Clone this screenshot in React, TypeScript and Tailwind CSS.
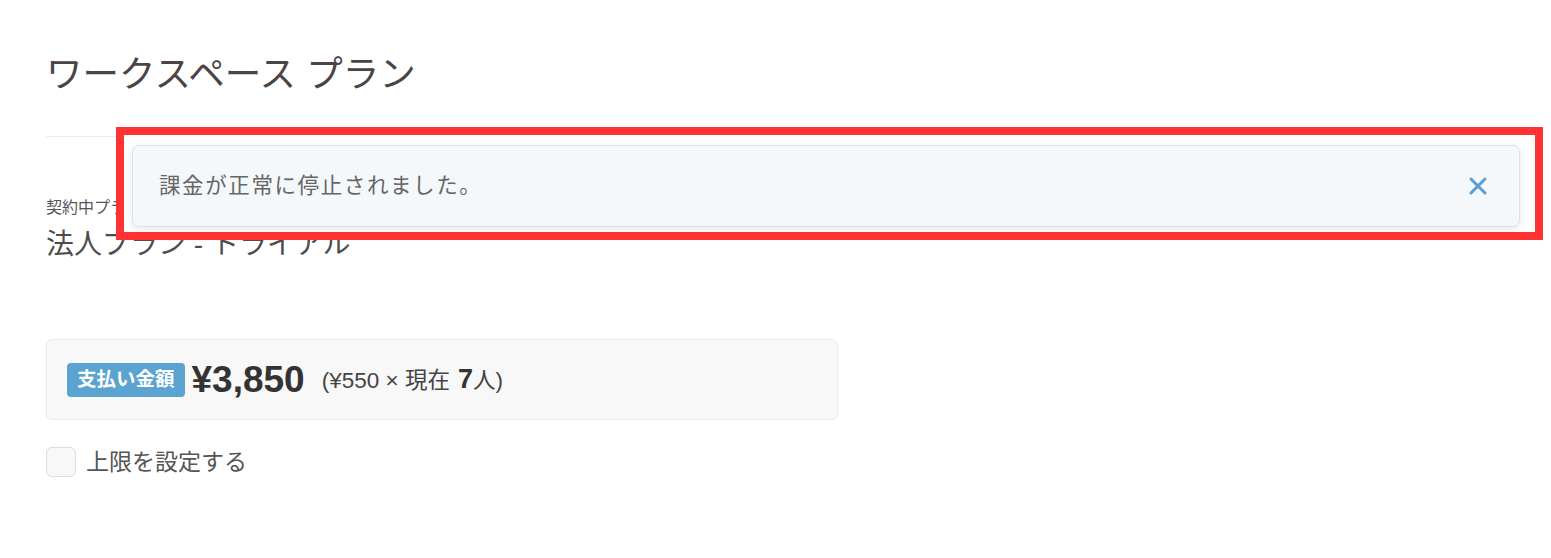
import { X } from "lucide-react";

const jp = "font-['Liberation_Sans','Noto_Sans_CJK_JP',sans-serif]";

export default function App() {
  return (
    <div className={`relative h-[558px] w-full overflow-hidden bg-white ${jp} text-[#4d4d4d]`}>
      {/* PAGE */}
      <div className="px-[46px] pt-[49px]">
        <h1 className="text-[36.5px] leading-[52px] font-normal text-[#4a4444]">
          ワークスペース プラン
        </h1>

        <hr className="mt-[35px] border-t border-[#ececec]" />

        <div className="mt-[59px] text-[16px] leading-[24px] text-[#555]">
          契約中プラン
        </div>
        <div className="mt-[6px] text-[28px] leading-[38px] text-[#4d4d4d]">
          法人プラン - トライアル
        </div>

        {/* PAYMENT */}
        <div className="mt-[75px] flex h-[81px] w-[792px] items-center gap-[7px] rounded-[6px] border border-[#ececec] bg-[#f8f8f8] pl-[20px]">
          <span className="flex h-[34px] items-center rounded-[4px] bg-[#5ba3d0] px-[10px] text-[19.5px] font-bold text-white">
            支払い金額
          </span>
          <span className="text-[37px] font-bold leading-none text-[#333]">
            ¥3,850
          </span>
          <span className="ml-[10px] flex items-baseline text-[22.5px] text-[#444]">
            (¥550 × 現在
            <span className="ml-[8px] text-[27px] font-bold text-[#333]">7</span>
            人)
          </span>
        </div>

        {/* LIMIT */}
        <label className="mt-[25px] flex items-center gap-[10px]">
          <span className="h-[30px] w-[30px] rounded-[6px] border border-[#dddddd] bg-[#f8f8f8]" />
          <span className="text-[23px] text-[#555]">上限を設定する</span>
        </label>
      </div>

      {/* TOAST WITH HIGHLIGHT */}
      <div className="absolute left-[116px] top-[127px] h-[113px] w-[1427px] border-[8px] border-[#ff3333] bg-white" />
      <div className="absolute left-[132px] top-[145px] flex h-[82px] w-[1388px] items-center justify-between rounded-[7px] border border-[#d4e5f1] bg-[#f4f8fb] pl-[26px] pr-[27px] shadow-[0_2px_10px_rgba(0,0,0,0.10)]">
        <span className="text-[21.5px] tracking-[1.6px] text-[#666]">
          課金が正常に停止されました。
        </span>
        <X size={28} strokeWidth={2.6} className="text-[#5a9fcf]" />
      </div>
    </div>
  );
}
